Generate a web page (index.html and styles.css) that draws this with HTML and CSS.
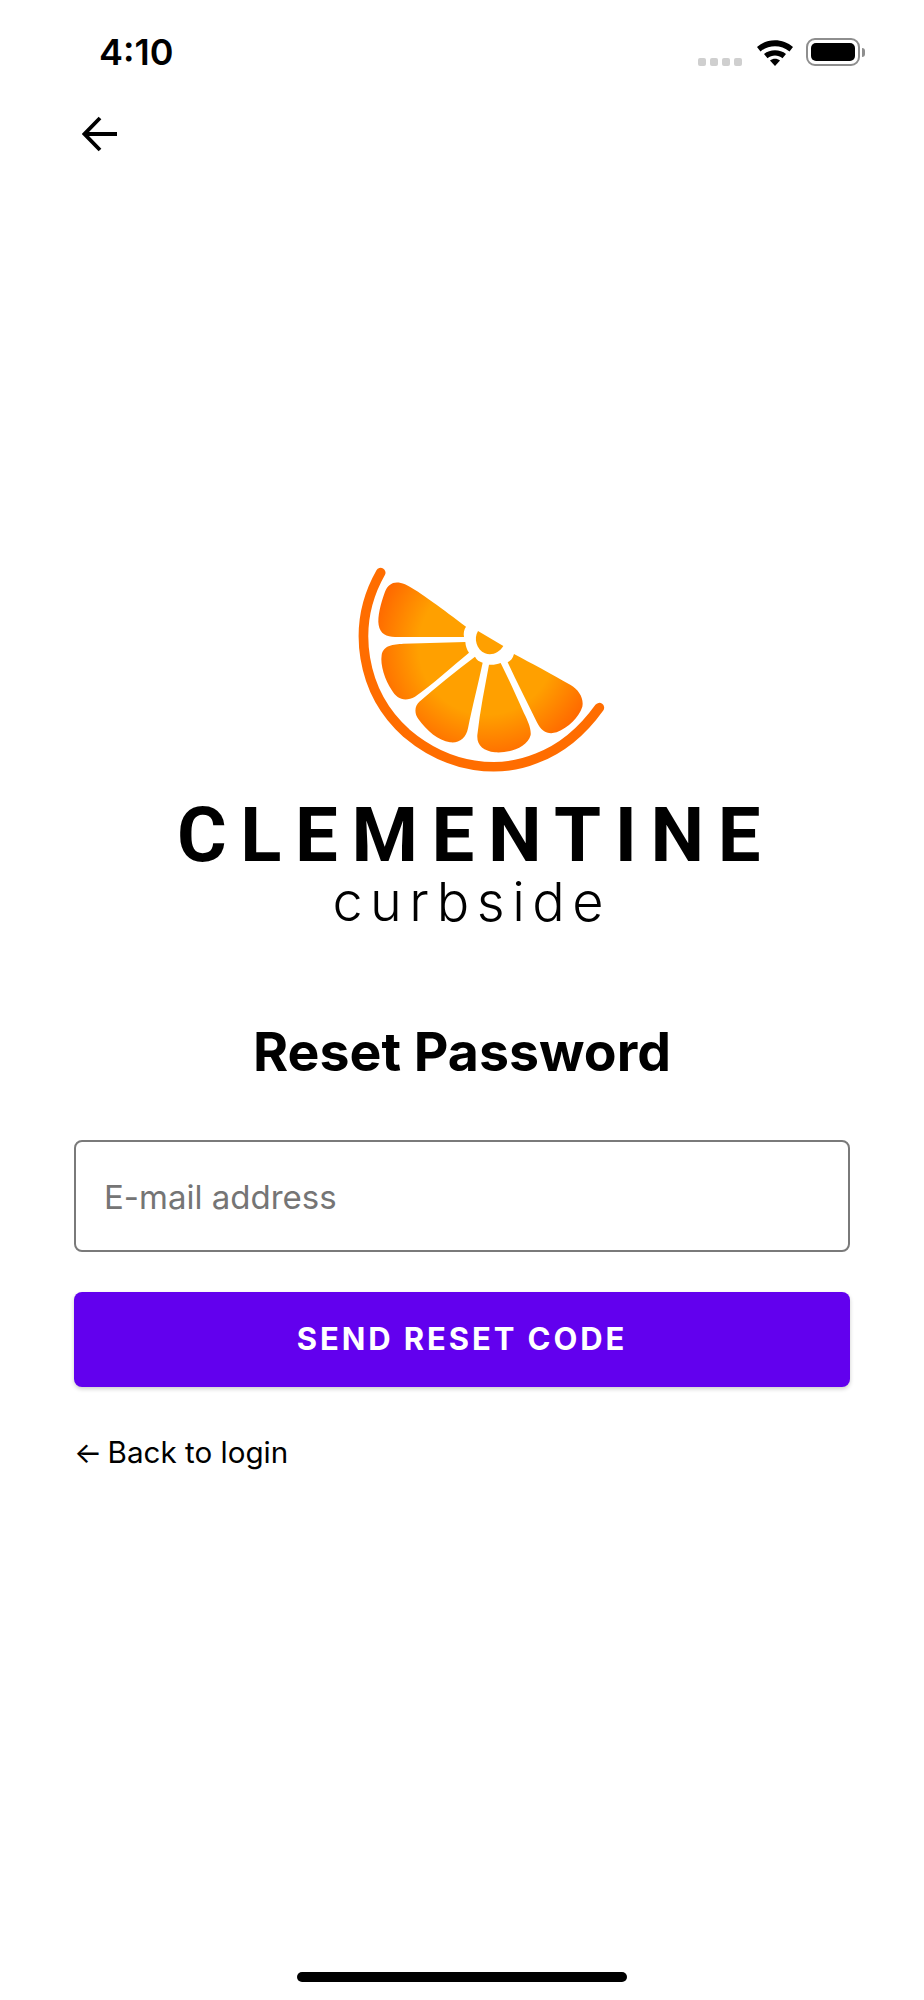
FILE: index.html
```html
<!DOCTYPE html>
<html>
<head>
    <title>Clementine Curbside - Reset Password</title>
    <link rel="stylesheet" href="styles.css">
</head>
<body>
    <div class="status-bar">
        <span class="clock">4:10</span>
        <div class="status-icons">
            <div class="signal"><i></i><i></i><i></i><i></i></div>
            <svg class="wifi" width="38" height="28" viewBox="0 0 38 28">
                <path d="M1 9C11 0 27 0 37 9L33.500 13.500C25 6.500 13 6.500 4.500 13.500Z"/>
                <path d="M8 16C14 11 24 11 30 16L26.500 20.300C22 16.500 16 16.500 11.500 20.300Z"/>
                <path d="M14 22.500C17 20.300 21 20.300 24 22.500L19 28Z"/>
            </svg>
            <div class="battery"><div class="battery-fill"></div></div>
            <div class="battery-tip"></div>
        </div>
    </div>

    <button class="back-btn" type="button" aria-label="Back">
        <svg width="36" height="36" viewBox="0 0 36 36">
            <path d="M35 18H3M18 2L2.500 18L18 34" fill="none" stroke="#000" stroke-width="3.800"/>
        </svg>
    </button>

    <div class="logo">
        <svg class="logo-mark" width="316" height="230" viewBox="-108 0 948 690">
            <defs>
                <radialGradient id="peel" gradientUnits="userSpaceOnUse" cx="440" cy="290" r="340">
                    <stop offset="0.6" stop-color="#ffa000"/>
                    <stop offset="1" stop-color="#ff6a00"/>
                </radialGradient>
            </defs>
            <path d="M122 68C30 230 65 430 200 550C330 660 480 670 590 625C670 595 730 540 778 473" fill="none" stroke="#ff6d00" stroke-width="29" stroke-linecap="round"/>
            <g fill="url(#peel)">
                <path d="M378 230C310 180 240 125 195 103C165 90 145 100 135 125C122 160 112 200 116 225C120 252 140 260 165 261L372 261C370 250 372 238 378 230Z"/>
                <path d="M376 276L190 281C160 283 130 285 125 315C120 345 135 390 155 420C170 447 195 457 225 440C280 402 335 350 387 308C380 298 377 288 376 276Z"/>
                <path d="M405 320C345 365 290 410 238 455C222 470 224 492 235 507C260 542 295 572 330 577C358 580 378 565 384 535C397 470 415 400 428 338C418 335 410 330 405 320Z"/>
                <path d="M447 344C435 410 420 480 412 555C410 587 430 602 465 607C510 610 562 592 572 555C574 535 562 510 552 490C530 440 505 385 482 339C470 344 458 345 447 344Z"/>
                <path d="M522 312C518 326 512 332 503 337C530 395 560 455 590 515C605 547 625 554 650 547C685 532 717 502 727 470C732 445 717 420 692 405C630 370 575 340 522 312Z"/>
                <path d="M414 243L490 288C478 308 455 318 435 310C410 300 400 265 414 243Z"/>
            </g>
        </svg>
        <div class="logo-name">CLEMENTINE</div>
        <div class="logo-sub">curbside</div>
    </div>

    <form class="reset-form">
        <h1>Reset Password</h1>
        <input type="text" placeholder="E-mail address">
        <button class="send-btn" type="submit">SEND RESET CODE</button>
        <a class="back-link" href="#"><span class="back-arrow">←</span> Back to login</a>
    </form>

    <div class="home-bar"></div>
</body>
</html>
```

FILE: styles.css
```css
html, body { margin: 0; padding: 0; }
body { height: 2000px; overflow: hidden; background: #fff; color: #000; font-family: Inter, sans-serif; display: flex; flex-direction: column; }

.status-bar { height: 88px; padding: 34px 59px 0 99px; box-sizing: border-box; display: flex; justify-content: space-between; align-items: flex-start; }
.clock { font-size: 36px; font-weight: 600; line-height: 36px; }
.status-icons { display: flex; align-items: flex-start; margin-top: 4px; }
.signal { display: flex; gap: 4px; margin-top: 20px; margin-right: 14px; }
.signal i { display: block; width: 8px; height: 8px; border-radius: 2px; background: #cfcfcf; }
.wifi { margin-right: 12px; }
.wifi path { fill: #000; }
.battery { width: 54px; height: 28px; padding: 3px; box-sizing: border-box; border: 2px solid #8e8e8e; border-radius: 9px; }
.battery-fill { height: 100%; background: #000; border-radius: 5px; }
.battery-tip { width: 3px; height: 9px; margin: 10px 0 0 2px; background: #8e8e8e; border-radius: 0 3px 3px 0; }

.back-btn { align-self: flex-start; margin: 28px 0 0 82px; padding: 0; height: 36px; background: none; border: none; }

.logo { margin-top: 398px; display: flex; flex-direction: column; align-items: center; }
.logo-mark { display: block; }
.logo-name { margin: 17px -13.600px 0 13.600px; font-family: Roboto, sans-serif; font-size: 76px; line-height: 76px; font-weight: 700; letter-spacing: 13.600px; }
.logo-sub { margin: -1px -7.500px 0 12px; font-size: 54px; line-height: 60px; letter-spacing: 7.500px; font-weight: 300; }

.reset-form { margin: 88px 74px 0; display: flex; flex-direction: column; }
h1 { margin: 0 0 56px; font-size: 53.600px; line-height: 64px; font-weight: 700; text-align: center; }
input { height: 112px; padding: 2px 28px 0; box-sizing: border-box; border: 2px solid #7a7a7a; border-radius: 8px; background: #fff; font: 400 33px Inter, sans-serif; color: #000; }
input::placeholder { color: #757575; opacity: 1; }
.send-btn { height: 95px; margin-top: 40px; padding-bottom: 3px; background: #6200ee; color: #fff; border: none; border-radius: 8px; font: 700 31px Inter, sans-serif; letter-spacing: 2.900px; box-shadow: 0 2px 4px rgba(0, 0, 0, 0.2); }
.back-link { margin-top: 47px; font-size: 29.600px; line-height: 36px; color: #000; text-decoration: none; }
.back-arrow { margin-right: -3px; }

.home-bar { width: 330px; height: 10px; margin: auto auto 18px; background: #000; border-radius: 5px; }
```
